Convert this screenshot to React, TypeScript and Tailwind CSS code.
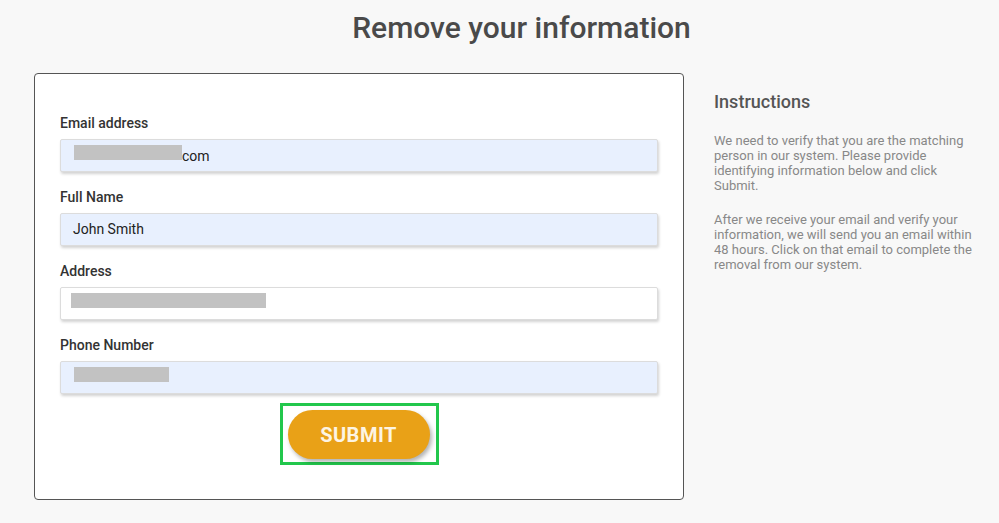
import React from 'react';

function Field({ label, filled = true, children }: { label: string; filled?: boolean; children: React.ReactNode }) {
  return (
    <div className="mb-[15px]">
      <div className="text-[14px] leading-[20px] font-medium text-[#333]">{label}</div>
      <div
        className={`mt-[6px] h-[33px] flex items-center pl-[12px] border border-[#dcdcdc] rounded-[2px] shadow-[1px_2px_3px_rgba(0,0,0,0.18)] text-[14px] text-[#222] ${filled ? 'bg-[#e8f0fe]' : 'bg-white'}`}
      >
        {children}
      </div>
    </div>
  );
}

const Redact = ({ w }: { w: number }) => (
  <span className="inline-block h-[15px] bg-[#c2c2c2]" style={{ width: w }} />
);

export default function App() {
  return (
    <div className="min-h-screen bg-[#f8f8f8] font-['Roboto',sans-serif]">
      <h1 className="pt-[10px] pl-[78px] pr-[34px] text-center text-[30px] leading-[36px] font-medium text-[#4a4a4a]">
        Remove your information
      </h1>

      <div className="mt-[27px] pl-[34px] flex items-start gap-[30px]">
        {/* Form card */}
        <div className="w-[650px] bg-white border border-[#555] rounded-[4px] px-[25px] pt-[39px] pb-[34px]">
          <Field label="Email address">
            <span className="ml-[1px]"><Redact w={108} /></span>
            <span className="leading-none">com</span>
          </Field>
          <Field label="Full Name">John Smith</Field>
          <Field label="Address" filled={false}>
            <span className="-ml-[2px]"><Redact w={195} /></span>
          </Field>
          <Field label="Phone Number">
            <span className="ml-[1px]"><Redact w={95} /></span>
          </Field>

          <div className="flex justify-center -mt-[6px]">
            <div className="border-[3px] border-[#22c74c] pl-[5px] pr-[6px] pt-[4px] pb-[3px]">
              <button className="w-[142px] h-[49px] rounded-full bg-[#e9a117] text-[#fdf4e3] text-[20px] font-bold tracking-[0.5px] shadow-[2px_3px_4px_rgba(0,0,0,0.3)]">
                SUBMIT
              </button>
            </div>
          </div>
        </div>

        {/* Instructions */}
        <div className="w-[262px] pt-[17px]">
          <h2 className="text-[18px] leading-[24px] font-medium text-[#555] mb-[19px]">Instructions</h2>
          <p className="text-[13px] leading-[15px] text-[#888] mb-[19px]">
            We need to verify that you are the matching person in our system. Please provide identifying information below and click Submit.
          </p>
          <p className="text-[13px] leading-[15px] text-[#888]">
            After we receive your email and verify your information, we will send you an email within 48 hours. Click on that email to complete the removal from our system.
          </p>
        </div>
      </div>
    </div>
  );
}
